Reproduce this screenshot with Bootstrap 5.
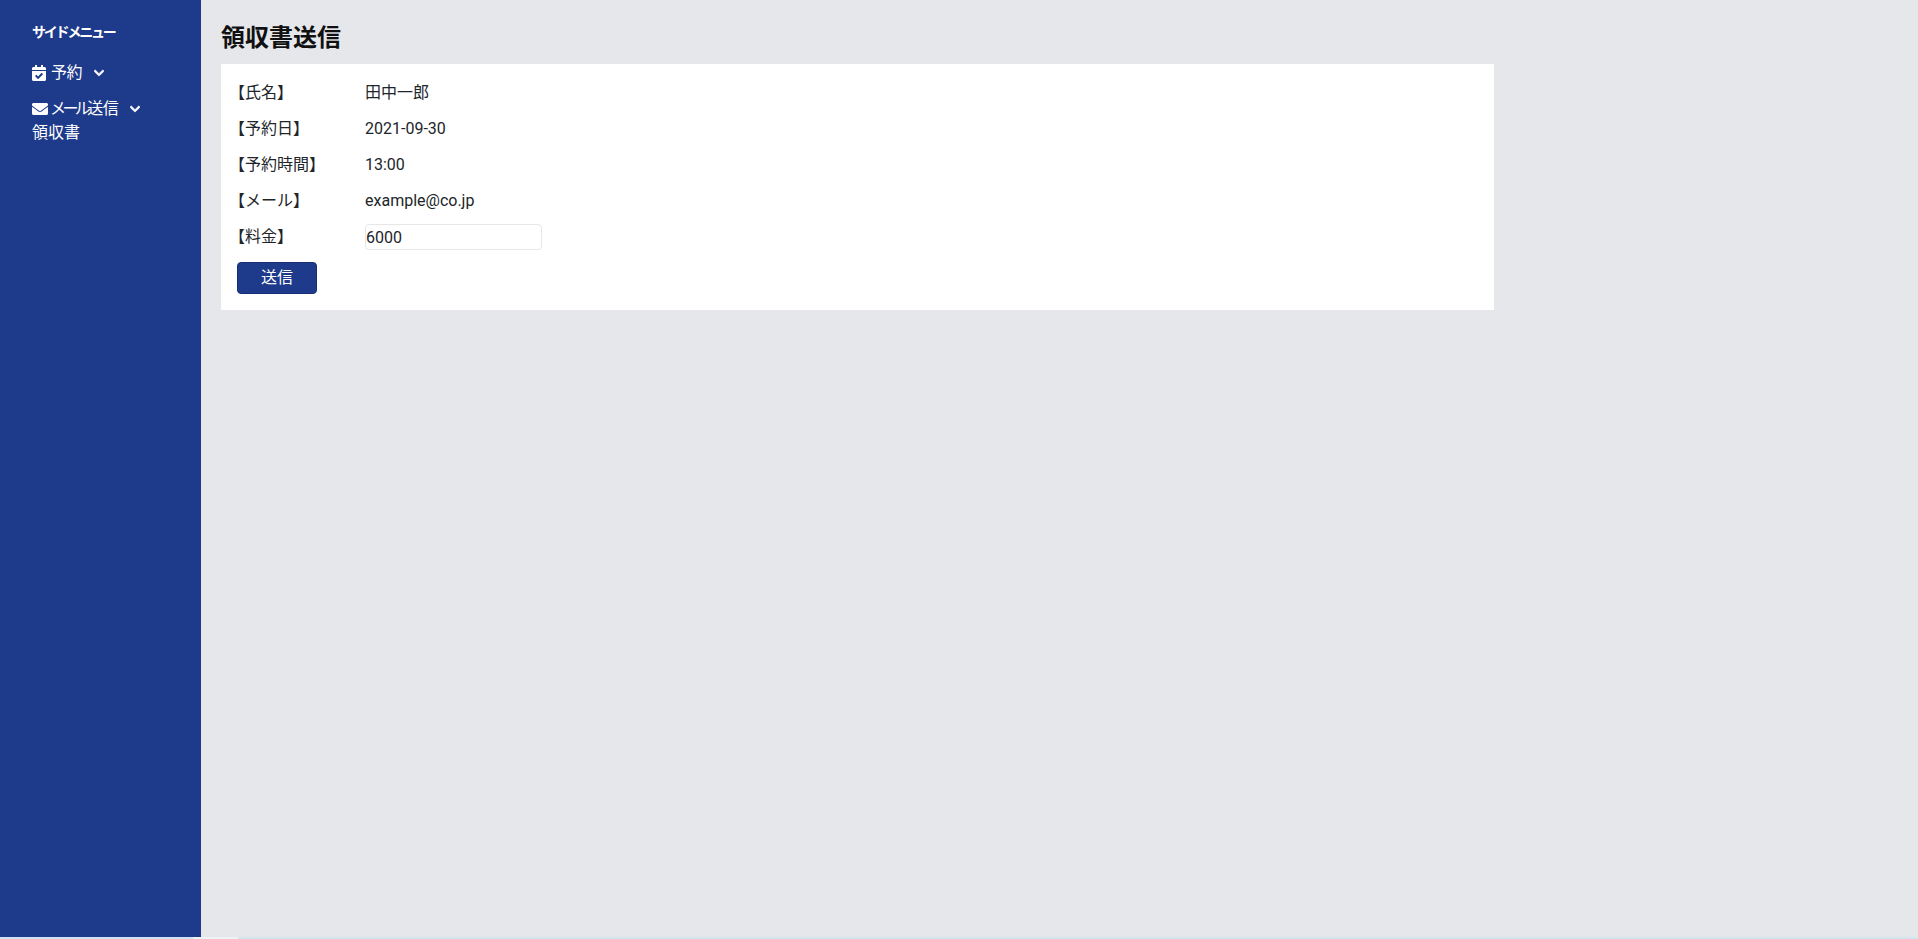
<!DOCTYPE html>
<html lang="ja">
<head>
<meta charset="utf-8">
<title>領収書送信</title>
<link href="https://cdn.jsdelivr.net/npm/bootstrap@5.3.0/dist/css/bootstrap.min.css" rel="stylesheet">
<style>
html,body{height:100%;margin:0}
body{background:linear-gradient(90deg,#cfe3f5 0,#cfe3f5 193px,#edf4f8 193px,#edf4f8 238px,#d3e6ee 238px);font-family:Roboto,"Noto Sans CJK JP",sans-serif;font-size:16px;color:#212529;overflow:hidden}
.app-shell{height:937px}
.side-pane{width:201px;background:#1e3a8a;color:#fff;padding:21px 0 0 32px;flex:none}
.side-title{font-family:"Noto Sans CJK JP",sans-serif;font-size:14px;font-weight:700;line-height:20px;letter-spacing:-2.2px;margin-bottom:20px}
.side-link{display:flex;align-items:center;line-height:24px;font-size:16px;color:#fff;text-decoration:none;height:24px}
.side-gap{margin-bottom:12px}
.side-link svg{fill:#fff;flex:none}
.ico-main{width:14px;height:16px;margin-right:5px}
.ico-wide{width:16px;margin-right:2px}
.ico-chev{width:10px;height:12px;margin-left:12px;stroke:#fff;stroke-width:30}
.tight-a{letter-spacing:-.6px}
.tight-b{letter-spacing:-3.6px}
.tight-c{letter-spacing:-.5px}
.main-pane{background:#e5e7eb;padding:20px 0 0 20px;flex:1;min-width:0}
.page-title{font-size:24px;font-weight:700;line-height:36px;margin:0 0 8px;color:#111}
.sheet{width:1273px;height:246px;background:#fff;padding:11px 16px 16px}
.info-row{display:flex;align-items:center;height:36px}
.info-label{width:136px;margin-left:-8px;flex:none}
.fee-input{width:177px;height:26px;border:1px solid #e5e7eb;border-radius:4px;padding:0;font:inherit;color:#212529;background:#fff}
.send-btn{width:80px;height:32px;background:#1e3a8a;border-color:#172f72;color:#fff;border-radius:4px;padding:0;font-size:16px;margin-top:7px;line-height:1}
</style>
</head>
<body>
<div class="app-shell d-flex">
  <aside class="side-pane">
    <div class="side-title">サイドメニュー</div>
    <a class="side-link side-gap" href="#">
      <svg class="ico-main" viewBox="0 0 448 512"><path d="M436 160H12c-6.627 0-12-5.373-12-12v-36c0-26.51 21.49-48 48-48h48V12c0-6.627 5.373-12 12-12h40c6.627 0 12 5.373 12 12v52h128V12c0-6.627 5.373-12 12-12h40c6.627 0 12 5.373 12 12v52h48c26.51 0 48 21.49 48 48v36c0 6.627-5.373 12-12 12zM12 192h424c6.627 0 12 5.373 12 12v260c0 26.51-21.49 48-48 48H48c-26.51 0-48-21.49-48-48V204c0-6.627 5.373-12 12-12zm333.296 95.947l-28.169-28.398c-4.667-4.705-12.265-4.736-16.970-.068L194.12 364.665l-45.98-46.352c-4.667-4.705-12.266-4.736-16.971-.068l-28.397 28.17c-4.705 4.667-4.736 12.265-.068 16.970l82.601 83.269c4.667 4.705 12.265 4.736 16.970.068l142.953-141.805c4.705-4.667 4.736-12.265.068-16.970z"/></svg>
      <span class="tight-a">予約</span>
      <svg class="ico-chev" viewBox="0 0 448 512"><path d="M207.029 381.476L12.686 187.132c-9.373-9.373-9.373-24.569 0-33.941l22.667-22.667c9.357-9.357 24.522-9.375 33.901-.04L224 284.505l154.745-154.021c9.379-9.335 24.544-9.317 33.901.04l22.667 22.667c9.373 9.373 9.373 24.569 0 33.941L240.971 381.476c-9.373 9.372-24.569 9.372-33.942 0z"/></svg>
    </a>
    <a class="side-link" href="#">
      <svg class="ico-main ico-wide" viewBox="0 0 512 512"><path d="M502.3 190.8c3.9-3.1 9.7-.2 9.7 4.7V400c0 26.5-21.5 48-48 48H48c-26.5 0-48-21.5-48-48V195.6c0-5 5.7-7.8 9.7-4.7 22.4 17.4 52.1 39.5 154.1 113.6 21.1 15.4 56.7 47.8 92.2 47.6 35.7.3 72-32.8 92.3-47.6 102-74.1 131.6-96.3 154-113.7zM256 320c23.2.4 56.6-29.2 73.4-41.4 132.7-96.3 142.8-104.7 173.4-128.7 5.8-4.5 9.2-11.5 9.2-18.9v-19c0-26.5-21.5-48-48-48H48C21.5 64 0 85.5 0 112v19c0 7.4 3.4 14.3 9.2 18.9 30.6 23.9 40.7 32.4 173.4 128.7 16.8 12.2 50.2 41.8 73.4 41.4z"/></svg>
      <span><span class="tight-b">メール</span><span class="tight-c">送信</span></span>
      <svg class="ico-chev" viewBox="0 0 448 512"><path d="M207.029 381.476L12.686 187.132c-9.373-9.373-9.373-24.569 0-33.941l22.667-22.667c9.357-9.357 24.522-9.375 33.901-.04L224 284.505l154.745-154.021c9.379-9.335 24.544-9.317 33.901.04l22.667 22.667c9.373 9.373 9.373 24.569 0 33.941L240.971 381.476c-9.373 9.372-24.569 9.372-33.942 0z"/></svg>
    </a>
    <a class="side-link" href="#">領収書</a>
  </aside>
  <main class="main-pane">
    <h1 class="page-title">領収書送信</h1>
    <form class="sheet">
      <div class="info-row"><div class="info-label">【氏名】</div><div>田中一郎</div></div>
      <div class="info-row"><div class="info-label">【予約日】</div><div>2021-09-30</div></div>
      <div class="info-row"><div class="info-label">【予約時間】</div><div>13:00</div></div>
      <div class="info-row"><div class="info-label">【メール】</div><div>example@co.jp</div></div>
      <div class="info-row"><div class="info-label">【料金】</div><input class="fee-input" type="text" value="6000"></div>
      <button type="button" class="btn send-btn">送信</button>
    </form>
  </main>
</div>
</body>
</html>
